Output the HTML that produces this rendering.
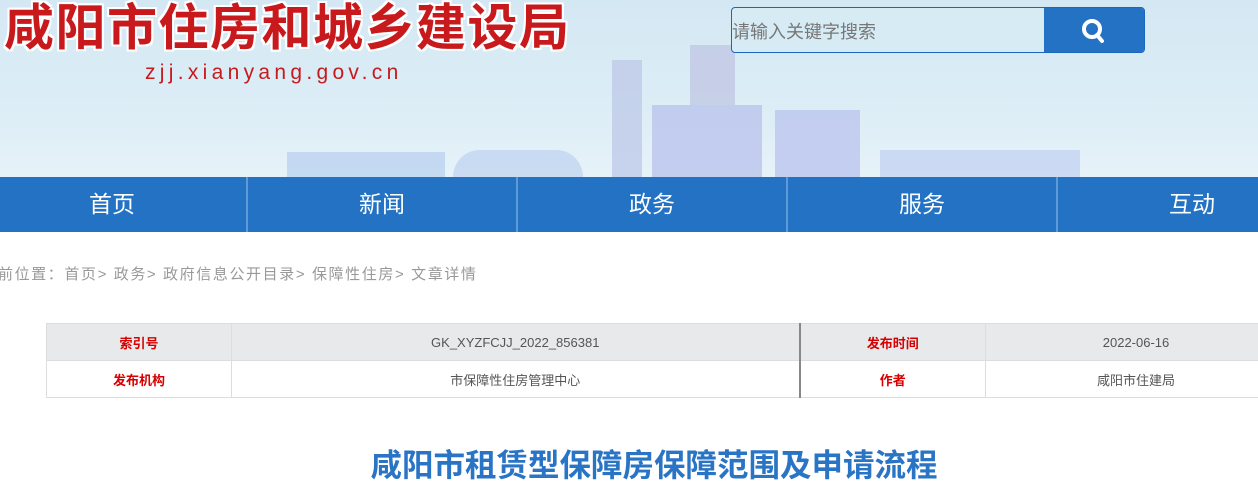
<!DOCTYPE html>
<html><head><meta charset="utf-8"><style>
*{margin:0;padding:0;box-sizing:border-box}
body{width:1258px;height:485px;overflow:hidden;background:#fff;font-family:"Liberation Sans","Noto Sans CJK SC",sans-serif;position:relative}
.hd{position:absolute;left:0;top:0;width:1258px;height:177px;background:linear-gradient(180deg,#d4e8f3 0%,#dcedf6 60%,#e6f2f8 100%);overflow:hidden}
.logo{position:absolute;left:4px;top:-12px;font-size:50px;font-weight:bold;color:#c81a1d;letter-spacing:1.5px;text-shadow:2px 0 #fff,-2px 0 #fff,0 2px #fff,0 -2px #fff,2px 2px #fff,-2px -2px #fff,2px -2px #fff,-2px 2px #fff;font-family:"Noto Sans CJK SC",sans-serif;white-space:nowrap}
.url{position:absolute;left:145px;top:61px;font-size:21px;color:#c81a1d;letter-spacing:4.3px}
.search{position:absolute;left:731px;top:7px;width:414px;height:46px;border:1px solid #1a66c0;border-radius:4px;background:#d6ebf4;overflow:hidden}
.search span{position:absolute;left:0;top:10px;font-size:18px;color:#777}
.search .btn{position:absolute;right:0;top:0;width:100px;height:46px;background:#2372c3}
.nav{position:absolute;left:0;top:177px;width:1258px;height:55px;background:#2372c3}
.nav div{position:absolute;top:0;height:55px;line-height:55px;color:#fff;font-size:23px;text-align:center;width:270px}
.nav i{position:absolute;top:0;width:2px;height:55px;background:#5f9ad8}
.bc{position:absolute;left:-2px;top:263px;font-size:15px;color:#999;letter-spacing:1.6px;white-space:nowrap}
table{position:absolute;left:46px;top:323px;border-collapse:collapse;font-size:13px;table-layout:fixed;width:1240px}
td{height:37px;text-align:center;border:1px solid #ddd;color:#555}
tr.g td{background:#e8e9eb}
td.l{color:#d80000;font-weight:bold}
td.s{border-right:2px solid #888}
h1{position:absolute;left:0;width:1308px;top:440px;text-align:center;font-size:31.5px;color:#2a74c5;font-weight:bold;font-family:"Noto Sans CJK SC",sans-serif}
.sk{position:absolute;background:#bcc9ee;opacity:.8}
</style></head><body>
<div class="hd">
<div class="sk" style="left:287px;top:152px;width:158px;height:25px;background:#bcd3ef"></div>
<div class="sk" style="left:453px;top:150px;width:130px;height:27px;border-radius:60px 60px 0 0;background:#c2d6f0"></div>
<div class="sk" style="left:612px;top:60px;width:30px;height:117px;background:#bfcbe8"></div>
<div class="sk" style="left:652px;top:105px;width:110px;height:72px;background:#bac4ec"></div>
<div class="sk" style="left:690px;top:45px;width:45px;height:60px;background:#c0c8e4"></div>
<div class="sk" style="left:775px;top:110px;width:85px;height:67px;background:#bcc6ee"></div>
<div class="sk" style="left:880px;top:150px;width:200px;height:27px;background:#c4d5f0"></div>
<div class="logo">咸阳市住房和城乡建设局</div>
<div class="url">zjj.xianyang.gov.cn</div>
<div class="search"><span>请输入关键字搜索</span><div class="btn"><svg width="100" height="46" viewBox="0 0 100 46"><circle cx="48" cy="21" r="8" fill="none" stroke="#fff" stroke-width="4"/><path d="M53 27l5 6" stroke="#fff" stroke-width="4" stroke-linecap="round"/></svg></div></div>
</div>
<div class="nav">
<div style="left:-23px">首页</div><i style="left:246px"></i>
<div style="left:247px">新闻</div><i style="left:516px"></i>
<div style="left:517px">政务</div><i style="left:786px"></i>
<div style="left:787px">服务</div><i style="left:1056px"></i>
<div style="left:1057px">互动</div>
</div>
<div class="bc">前位置：首页&gt; 政务&gt; 政府信息公开目录&gt; 保障性住房&gt; 文章详情</div>
<table>
<colgroup><col style="width:185px"><col style="width:568px"><col style="width:186px"><col style="width:301px"></colgroup>
<tr class="g"><td class="l">索引号</td><td class="s">GK_XYZFCJJ_2022_856381</td><td class="l">发布时间</td><td>2022-06-16</td></tr>
<tr><td class="l">发布机构</td><td class="s">市保障性住房管理中心</td><td class="l">作者</td><td>咸阳市住建局</td></tr>
</table>
<h1>咸阳市租赁型保障房保障范围及申请流程</h1>
</body></html>
